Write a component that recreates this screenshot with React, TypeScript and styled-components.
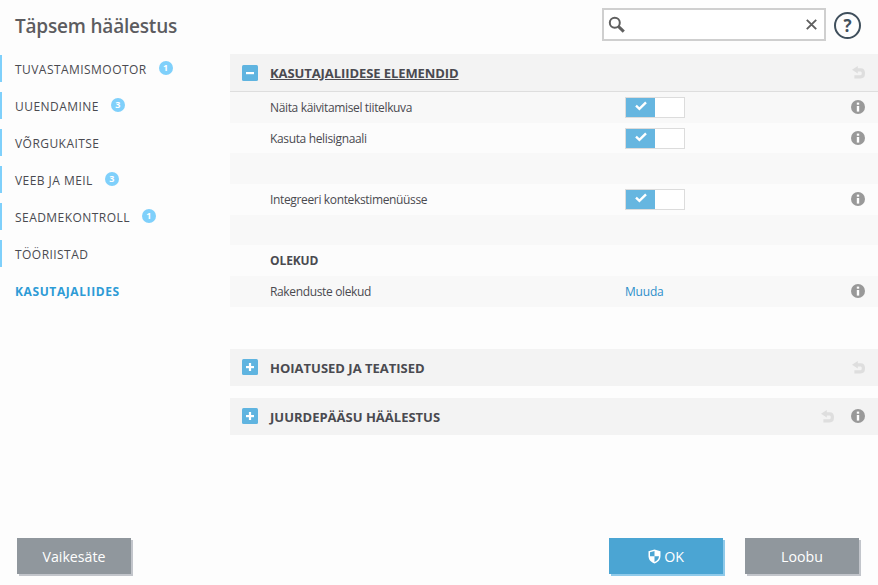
import React from 'react';
import styled, { createGlobalStyle } from 'styled-components';

const GlobalStyle = createGlobalStyle`
  html, body {
    margin: 0;
    padding: 0;
    background: #fdfdfd;
  }
  * {
    box-sizing: border-box;
  }
`;

const navItems = [
  { name: 'TUVASTAMISMOOTOR', badge: 1 },
  { name: 'UUENDAMINE', badge: 3 },
  { name: 'VÕRGUKAITSE' },
  { name: 'VEEB JA MEIL', badge: 3 },
  { name: 'SEADMEKONTROLL', badge: 1 },
  { name: 'TÖÖRIISTAD' },
  { name: 'KASUTAJALIIDES', active: true },
];

const InfoIcon = () => (
  <InfoSvg viewBox="0 0 14 14">
    <circle cx="7" cy="7" r="7" fill="#999" />
    <rect x="5.8" y="6" width="2.4" height="5.6" fill="#fff" />
    <rect x="5.8" y="2.6" width="2.4" height="2.1" fill="#fff" />
  </InfoSvg>
);

const UndoIcon = () => (
  <UndoSvg viewBox="0 0 13 13">
    <path d="M5.8 0 L0 3.8 L5.8 7.6 Z" fill="#dedede" />
    <path d="M4 3.8 H8.8 C10.8 3.8 11.4 5.4 11.4 7.2 C11.4 9.2 10.4 10.8 8.6 10.8 H2.4" fill="none" stroke="#dedede" strokeWidth="3.2" />
  </UndoSvg>
);

const ExpandBox = ({ open }: { open?: boolean }) => (
  <BoxSvg viewBox="0 0 16 16">
    <rect width="16" height="16" rx="1.5" fill="#5fb4e0" />
    <rect x="4" y="7" width="8" height="2.2" fill="#fff" />
    {!open && <rect x="6.9" y="4" width="2.2" height="8" fill="#fff" />}
  </BoxSvg>
);

const Toggle = () => (
  <ToggleBox>
    <ToggleOn>
      <CheckMark width="12" height="10" viewBox="0 0 12 10">
        <path d="M1 4.6 L4.4 7.8 L11 1.4" fill="none" stroke="#fff" strokeWidth="2.4" />
      </CheckMark>
    </ToggleOn>
  </ToggleBox>
);

const App: React.FC = () => {
  return (
    <Page>
      <GlobalStyle />
      <TopBar>
        <Title>Täpsem häälestus</Title>
        <SearchBox>
          <svg width="18" height="18" viewBox="0 0 18 18">
            <circle cx="6.8" cy="6.8" r="5" fill="none" stroke="#5f5f5f" strokeWidth="2" />
            <path d="M10.6 10.6 L15.8 15.6" stroke="#5f5f5f" strokeWidth="3" />
          </svg>
          <svg width="11" height="11" viewBox="0 0 11 11">
            <path d="M0.8 0.8 L10.2 10.2 M10.2 0.8 L0.8 10.2" stroke="#5f5f5f" strokeWidth="1.9" />
          </svg>
        </SearchBox>
        <HelpButton>?</HelpButton>
      </TopBar>

      <Body>
        <Sidebar>
          {navItems.map(item => (
            <NavItem key={item.name} $active={item.active}>
              <NavLabel $active={item.active}>{item.name}</NavLabel>
              {item.badge && <Badge>{item.badge}</Badge>}
            </NavItem>
          ))}
        </Sidebar>

        <Main>
          <SectionHead $open>
            <ExpandBox open />
            <SectionTitle $open>KASUTAJALIIDESE ELEMENDID</SectionTitle>
            <HeadIcons>
              <UndoIcon />
            </HeadIcons>
          </SectionHead>

          <Row $shade>
            <RowLabel>Näita käivitamisel tiitelkuva</RowLabel>
            <RowValue><Toggle /></RowValue>
            <InfoIcon />
          </Row>
          <Row>
            <RowLabel>Kasuta helisignaali</RowLabel>
            <RowValue><Toggle /></RowValue>
            <InfoIcon />
          </Row>
          <Row $shade />
          <Row>
            <RowLabel>Integreeri kontekstimenüüsse</RowLabel>
            <RowValue><Toggle /></RowValue>
            <InfoIcon />
          </Row>
          <Row $shade />
          <Row>
            <RowHeading>OLEKUD</RowHeading>
          </Row>
          <Row $shade>
            <RowLabel>Rakenduste olekud</RowLabel>
            <RowValue><ChangeLink>Muuda</ChangeLink></RowValue>
            <InfoIcon />
          </Row>

          <SectionHead $gap={42}>
            <ExpandBox />
            <SectionTitle>HOIATUSED JA TEATISED</SectionTitle>
            <HeadIcons>
              <UndoIcon />
            </HeadIcons>
          </SectionHead>

          <SectionHead $gap={12}>
            <ExpandBox />
            <SectionTitle>JUURDEPÄÄSU HÄÄLESTUS</SectionTitle>
            <HeadIcons>
              <UndoIcon />
              <InfoIcon />
            </HeadIcons>
          </SectionHead>
        </Main>
      </Body>

      <Footer>
        <FooterButton>Vaikesäte</FooterButton>
        <FooterRight>
          <FooterButton $primary>
            <svg width="13" height="15" viewBox="0 0 13 15">
              <path d="M6.5 0.5 L12.5 2.2 V7 C12.5 10.8 10 13.2 6.5 14.5 C3 13.2 0.5 10.8 0.5 7 V2.2 Z" fill="#fff" />
              <path d="M6.5 2 V7.3 H11 C10.9 10 9 11.9 6.5 13 V7.3 H2 V3.3 Z" fill="#4ba5d3" />
            </svg>
            OK
          </FooterButton>
          <FooterButton>Loobu</FooterButton>
        </FooterRight>
      </Footer>
    </Page>
  );
};

const Page = styled.div`
  width: 878px;
  height: 585px;
  display: flex;
  flex-direction: column;
  overflow: hidden;
  font-family: 'Open Sans', 'Noto Sans', sans-serif;
  color: #4a4a50;
  background: #fdfdfd;
`;

const TopBar = styled.div`
  height: 54px;
  display: flex;
  align-items: flex-start;
  padding: 8px 17px 0 15px;
`;

const Title = styled.h1`
  margin: 5px auto 0 0;
  font-size: 19px;
  line-height: 27px;
  font-weight: 600;
  letter-spacing: -0.2px;
  color: #5c5c60;
`;

const SearchBox = styled.div`
  width: 224px;
  height: 33px;
  border: 2px solid #cfcfcf;
  background: #fff;
  display: flex;
  align-items: center;
  justify-content: space-between;
  padding: 0 7px 0 4px;
`;

const HelpButton = styled.div`
  width: 27px;
  height: 27px;
  margin: 4px 0 0 8px;
  border: 2px solid #3f4f5c;
  border-radius: 50%;
  display: flex;
  align-items: center;
  justify-content: center;
  font-size: 17px;
  font-weight: 700;
  color: #3f4f5c;
`;

const Body = styled.div`
  flex: 1;
  display: flex;
`;

const Sidebar = styled.nav`
  width: 230px;
  flex: none;
  display: flex;
  flex-direction: column;
  gap: 10px;
  padding-top: 1px;
`;

const NavItem = styled.div<{ $active?: boolean }>`
  height: 27px;
  display: flex;
  align-items: center;
  padding: 1px 0 0 13px;
  border-left: 2px solid ${p => (p.$active ? 'transparent' : '#7fd0fb')};
`;

const NavLabel = styled.span<{ $active?: boolean }>`
  font-size: 12px;
  letter-spacing: ${p => (p.$active ? 0.6 : 0.45)}px;
  font-weight: ${p => (p.$active ? 700 : 400)};
  color: ${p => (p.$active ? '#2d9bd6' : '#4a4a50')};
`;

const Badge = styled.span`
  width: 14px;
  height: 14px;
  margin: -3px 0 0 12px;
  border-radius: 50%;
  background: #7fd0fb;
  color: #fff;
  font-size: 9px;
  font-weight: 700;
  display: flex;
  align-items: center;
  justify-content: center;
`;

const Main = styled.main`
  flex: 1;
  display: flex;
  flex-direction: column;
`;

const SectionHead = styled.div<{ $open?: boolean; $gap?: number }>`
  height: ${p => (p.$open ? 38 : 37)}px;
  margin-top: ${p => p.$gap ?? 0}px;
  flex: none;
  display: flex;
  align-items: center;
  gap: 12px;
  padding: 0 13px 0 12px;
  background: #f3f3f3;
  border-bottom: ${p => (p.$open ? '1px solid #dedede' : 'none')};
`;

const SectionTitle = styled.span<{ $open?: boolean }>`
  font-size: 13px;
  font-weight: 700;
  letter-spacing: ${p => (p.$open ? -0.08 : 0)}px;
  padding-top: ${p => (p.$open ? 0 : 1)}px;
  color: #4a4a50;
  text-decoration: ${p => (p.$open ? 'underline' : 'none')};
`;

const HeadIcons = styled.div`
  margin-left: auto;
  display: flex;
  align-items: center;
  gap: 17px;
`;

const BoxSvg = styled.svg`
  width: 16px;
  height: 16px;
  flex: none;
`;

const InfoSvg = styled.svg`
  width: 14px;
  height: 14px;
  flex: none;
`;

const UndoSvg = styled.svg`
  width: 13px;
  height: 13px;
  flex: none;
`;

const Row = styled.div<{ $shade?: boolean }>`
  height: 30.7px;
  flex: none;
  display: flex;
  align-items: center;
  padding: 0 13px 0 40px;
  background: ${p => (p.$shade ? '#f8f8f8' : '#fcfcfc')};
`;

const RowLabel = styled.span`
  width: 355px;
  flex: none;
  font-size: 12px;
  letter-spacing: -0.35px;
  color: #4a4a50;
`;

const RowHeading = styled.span`
  font-size: 12px;
  font-weight: 700;
  letter-spacing: -0.1px;
  color: #4a4a50;
`;

const RowValue = styled.div`
  flex: 1;
  display: flex;
  align-items: center;
`;

const ChangeLink = styled.a`
  font-size: 12px;
  letter-spacing: -0.2px;
  color: #2d8fca;
`;

const ToggleBox = styled.div`
  width: 60px;
  height: 21px;
  border: 1px solid #dcdcdc;
  background: #fff;
  display: flex;
`;

const ToggleOn = styled.div`
  width: 29px;
  background: #66b6e0;
  display: flex;
  align-items: center;
  justify-content: center;
`;

const CheckMark = styled.svg`
  margin-bottom: 2px;
`;

const Footer = styled.div`
  height: 54px;
  display: flex;
  justify-content: space-between;
  padding: 7px 19px 0 17px;
`;

const FooterRight = styled.div`
  display: flex;
  gap: 22px;
`;

const FooterButton = styled.button<{ $primary?: boolean }>`
  width: 114px;
  height: 36px;
  border: none;
  padding: 0;
  display: flex;
  align-items: center;
  justify-content: center;
  gap: 3px;
  font-family: inherit;
  font-size: 14.2px;
  color: #fff;
  background: ${p => (p.$primary ? '#4ba5d3' : '#90979d')};
  box-shadow: 2px 2px 0 ${p => (p.$primary ? '#8fcaea' : '#c2c5cb')};
`;

export default App;
